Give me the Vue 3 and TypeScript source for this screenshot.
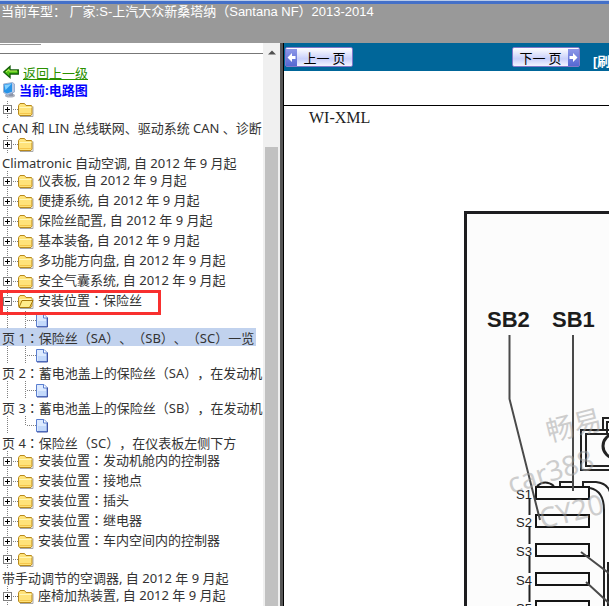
<script setup lang="ts">
interface TreeItem {
  label: string
  kind: 'closed' | 'open' | 'page'
  wrapped?: boolean
  active?: boolean
  last?: boolean
}

const items: TreeItem[] = [
  { label: 'CAN 和 LIN 总线联网、驱动系统 CAN 、诊断', kind: 'closed', wrapped: true },
  { label: 'Climatronic 自动空调, 自 2012 年 9 月起', kind: 'closed', wrapped: true },
  { label: '仪表板, 自 2012 年 9 月起', kind: 'closed' },
  { label: '便捷系统, 自 2012 年 9 月起', kind: 'closed' },
  { label: '保险丝配置, 自 2012 年 9 月起', kind: 'closed' },
  { label: '基本装备, 自 2012 年 9 月起', kind: 'closed' },
  { label: '多功能方向盘, 自 2012 年 9 月起', kind: 'closed' },
  { label: '安全气囊系统, 自 2012 年 9 月起', kind: 'closed' },
  { label: '安装位置：保险丝', kind: 'open' },
  { label: '页 1：保险丝（SA）、（SB）、（SC）一览', kind: 'page', wrapped: true, active: true },
  { label: '页 2：蓄电池盖上的保险丝（SA），在发动机', kind: 'page', wrapped: true },
  { label: '页 3：蓄电池盖上的保险丝（SB），在发动机', kind: 'page', wrapped: true },
  { label: '页 4：保险丝（SC），在仪表板左侧下方', kind: 'page', wrapped: true, last: true },
  { label: '安装位置：发动机舱内的控制器', kind: 'closed' },
  { label: '安装位置：接地点', kind: 'closed' },
  { label: '安装位置：插头', kind: 'closed' },
  { label: '安装位置：继电器', kind: 'closed' },
  { label: '安装位置：车内空间内的控制器', kind: 'closed' },
  { label: '带手动调节的空调器, 自 2012 年 9 月起', kind: 'closed', wrapped: true },
  { label: '座椅加热装置, 自 2012 年 9 月起', kind: 'closed' },
]

// Full-width colons are set centred in their cell.
const parts = (label: string): string[] => label.split(/(：)/).filter(Boolean)

const slots = [
  { name: 'S1', y: 487 },
  { name: 'S2', y: 515 },
  { name: 'S3', y: 544 },
  { name: 'S4', y: 573 },
  { name: 'S5', y: 601 },
]
</script>

<template>
  <div class="page">
    <header class="top">当前车型： 厂家:S-上汽大众新桑塔纳（Santana NF）2013-2014</header>
    <div class="body">
      <aside class="side">
        <div class="list">
          <div class="stub"><div class="tab"></div></div>
          <nav class="crumbs">
            <div class="crumb">
              <svg width="16" height="14" viewBox="0 0 16 14"><path d="M.7 7 7 1.5V5h8.300v4H7v3.500Z" fill="#4fc414" stroke="#125c08" stroke-width="1.300" /><path d="M3 7 6 4.500V6h8" fill="none" stroke="#c4ef62" /></svg>
              <a href="#">返回上一级</a>
            </div>
            <div class="crumb now">
              <svg width="13" height="16" viewBox="0 0 13 16"><ellipse cx="7" cy="13.500" rx="5" ry="2" fill="#aab0bd" /><path d="M6 10h4v4H6z" fill="#8d95a8" /><path d="m.5 2 9-1.500 2 1.500v8l-7 3L.5 10.500Z" fill="#b8c8e4" stroke="#8da3c8" stroke-width=".8" /><path d="m1 2.500 8-1.300v8.500L4 11.500 1 10Z" fill="#2794e8" /><path d="m1.500 3 7-1-6 6Z" fill="#83d0ff" /></svg>
              <strong>当前:电路图</strong>
            </div>
          </nav>
          <ul class="tree">
            <li v-for="item in items" :key="item.label" class="row" :class="[item.kind, { wrapped: item.wrapped }]">
              <svg v-if="item.kind === 'page'" class="lead" width="50" height="17" viewBox="0 0 50 17">
                <path d="M7.500 0v17" class="dots" />
                <path :d="item.last ? 'M25.500 0v9' : 'M25.500 0v17'" class="dots" />
                <path d="M27 9.500h9" class="dots" />
                <path d="M36.500 3.500h7.500l3 3v9H36.500Z" fill="#dceaff" stroke="#5b7fd0" />
                <path d="M38 10h8v5h-8Z" fill="#c3d9fb" />
                <path d="M47.500 6.500v9.500H37" fill="none" stroke="#4055a5" />
                <path d="M43.500 3.500v3.500H47" fill="#fff" stroke="#5b7fd0" />
              </svg>
              <svg v-else class="lead" width="36" :height="item.wrapped ? 17 : 20" :viewBox="item.wrapped ? '0 2 36 17' : '0 0 36 20'">
                <path d="M7.500 0v20" class="dots" />
                <path d="M13 10.500h5" class="dots" />
                <rect x="3.500" y="6.500" width="8" height="8" fill="#fff" stroke="#808080" />
                <path d="M5 10.500h5" stroke="#000" />
                <path v-if="item.kind === 'closed'" d="M7.500 8v5" stroke="#000" />
                <path d="M20 17.500h13v-10" fill="none" stroke="#aaa" />
                <path d="M18.500 15V6.500l1.500-2h4.500l1.500 2h5.500l.5 1V15l-1 1.500H19.500Z" fill="#ffe37a" stroke="#b8891c" />
                <path d="M19.500 8.500h12" stroke="#fff7b8" />
                <path d="M19.500 14.500h12" stroke="#f5c64c" />
                <path v-if="item.kind === 'open'" d="M19 16.500h10.500l3.500-7H22Z" fill="#ffec8a" stroke="#a87a0c" />
              </svg>
              <a href="#" class="label" :class="{ active: item.active }"><span v-for="(part, i) in parts(item.label)" :key="i" :class="{ mark: part === '：' }">{{ part }}</span></a>
            </li>
          </ul>
        </div>
        <div class="scroll">
          <svg width="17" height="18" viewBox="0 0 17 18"><path d="M5 11.500h8l-4-4Z" fill="#505050" /></svg>
          <div class="thumb"></div>
        </div>
      </aside>
      <main class="view">
        <div class="bar">
          <button type="button" class="nav"><svg width="11" height="17" viewBox="0 0 11 17"><path d="M1.500 8.500 6 4v3h3.500v3H6v3Z" fill="#fff" /></svg><span>上一 页</span></button>
          <button type="button" class="nav next"><span>下一 页</span><svg width="11" height="17" viewBox="0 0 11 17"><path d="M9.500 8.500 5 4v3H1.500v3H5v3Z" fill="#fff" /></svg></button>
          <a href="#" class="refresh">[刷</a>
        </div>
        <div class="gap"></div>
        <svg class="diagram" width="325" height="500" viewBox="284 106 325 500">
          <text x="309" y="123" class="xml">WI-XML</text>
          <rect x="465.500" y="212.500" width="200" height="450" fill="#fcfcfc" stroke="#1d1d20" stroke-width="3" />
          <text x="487" y="327" class="big">SB2</text>
          <text x="552" y="327" class="big">SB1</text>
          <g fill="none" stroke="#222" stroke-width="2">
            <path d="M529.500 498v17M529.500 527v17M529.500 556v17M529.500 585v17" />
            <path d="M537 486q8-7 17 0M560 486v-4h13M583 486v-4h13q11 1 14 10M590 488q14 3 14 22v97" />
            <path d="M610 430h-29v40h29M610 434h-24v32h24M603 430v-12h7M607 434v-12h3" />
            <circle cx="615" cy="446" r="12" stroke-width="3" />
            <path d="M608.500 562v44" stroke-width="3" />
          </g>
          <g v-for="slot in slots" :key="slot.name">
            <rect x="536" :y="slot.y" width="53" height="12" fill="#fcfcfc" stroke="#151515" stroke-width="2" />
            <text x="516" :y="slot.y + 12" class="small">{{ slot.name }}</text>
          </g>
          <g fill="none" stroke="#4a4a4a" stroke-width="2">
            <path d="M509.500 335v64l30.500 121" />
            <path d="M573 335v156" />
            <path d="m581 552 29 22M586 582l24 22" />
          </g>
          <g class="watermark">
            <text transform="translate(549 442) rotate(-14)">畅易</text>
            <text transform="translate(511 494) rotate(-17)">car388</text>
            <text transform="translate(542 529) rotate(-14)">CY20</text>
          </g>
        </svg>
      </main>
    </div>
  </div>
</template>

<style>
body {
  margin: 0;
  overflow: hidden;
}
</style>

<style scoped>
.page {
  display: flex;
  flex-direction: column;
  height: 100vh;
  overflow: hidden;
  background: #fff;
  font-family: "Noto Sans", "Noto Sans CJK SC", sans-serif;
  font-size: 13px;
  color: #333;
  text-spacing-trim: space-all;
}
.top {
  box-sizing: border-box;
  flex: none;
  height: 43px;
  padding: 3px 0 0 1px;
  background: linear-gradient(#b9cbea 1px, #4470c8 1px, #4470c8 4px, #999 4px);
  color: #fff;
  font-family: "Liberation Sans", "Noto Sans CJK SC", sans-serif;
  line-height: 18px;
  white-space: nowrap;
}
.body {
  display: flex;
  flex: 1;
  min-height: 0;
}
.side {
  box-sizing: border-box;
  display: flex;
  flex: none;
  width: 283px;
  border-right: 3px solid #555;
}
.list {
  flex: 1;
  min-width: 0;
  overflow: hidden;
}
.stub {
  height: 10px;
  border-bottom: 1px solid #777;
}
.tab {
  width: 41px;
  height: 1px;
  border-bottom: 1px solid #999;
}
.crumbs {
  padding: 9px 0 3px;
}
.crumb {
  display: flex;
  align-items: center;
  gap: 4px;
  height: 18px;
  padding-left: 3px;
}
.crumb a {
  color: #2a9000;
}
.now {
  gap: 3px;
  height: 17px;
}
.now strong {
  color: #00f;
}
.tree {
  list-style: none;
  margin: 0;
  padding: 0;
}
.row {
  position: relative;
  display: flex;
  height: 20px;
  white-space: nowrap;
}
.lead {
  display: block;
  flex: none;
}
.dots {
  fill: none;
  stroke: #808080;
  stroke-dasharray: 1 1;
}
.label {
  color: #333;
  text-decoration: none;
  line-height: 18px;
  padding-left: 2px;
}
.mark {
  font-family: "Noto Sans CJK TC", sans-serif;
}
.wrapped {
  flex-direction: column;
  align-items: flex-start;
  height: 35px;
}
.wrapped .label {
  height: 18px;
  line-height: 20px;
}
.wrapped .active {
  background: #c1d2ee;
  padding-right: 2px;
}
.open {
  z-index: 1;
}
.open::after {
  content: "";
  box-sizing: border-box;
  position: absolute;
  left: 0;
  top: -1px;
  width: 161px;
  height: 25px;
  border: 3px solid #f8302f;
  pointer-events: none;
}
.scroll {
  display: flex;
  flex-direction: column;
  flex: none;
  width: 17px;
  background: #f0f0f0;
}
.thumb {
  flex: 1;
  margin: 86px 2px 0;
  background: #c1c1c1;
}
.view {
  display: flex;
  flex-direction: column;
  flex: 1;
  min-width: 0;
  overflow: hidden;
  border-left: 1px solid #000;
}
.bar {
  box-sizing: border-box;
  display: flex;
  flex: none;
  height: 28px;
  padding: 4px 0 0 1px;
  background: #069;
}
.nav {
  box-sizing: border-box;
  display: flex;
  align-items: center;
  flex: none;
  width: 68px;
  height: 20px;
  padding: 0;
  border: 1px solid #8178c8;
  border-radius: 2px;
  background: linear-gradient(#fff, #c8cffa 60%, #f4f4ff);
  color: #000;
  font: 400 13px "Noto Sans CJK SC", sans-serif;
  white-space: nowrap;
}
.nav span {
  flex: 1;
}
.nav svg {
  flex: none;
  background: linear-gradient(#8d97e8, #5568d2);
}
.next {
  margin-left: 159px;
}
.refresh {
  align-self: flex-end;
  margin-left: 13px;
  color: #fff;
  font: 700 13px/18px "Liberation Sans", "Noto Sans CJK SC", sans-serif;
  text-decoration: none;
  white-space: nowrap;
}
.gap {
  flex: none;
  height: 34px;
  border-bottom: 1px solid #000;
}
.diagram {
  display: block;
  flex: none;
}
.xml {
  font: 16px "Liberation Serif", serif;
  fill: #222;
}
.big {
  font: 700 22px "Liberation Sans", sans-serif;
  fill: #1c1c1c;
}
.small {
  font: 13px "Liberation Sans", sans-serif;
  fill: #222;
}
.watermark {
  font: 28px "Noto Sans", "Noto Sans CJK SC", sans-serif;
  fill: #a0a0a0;
  opacity: .5;
}
</style>
